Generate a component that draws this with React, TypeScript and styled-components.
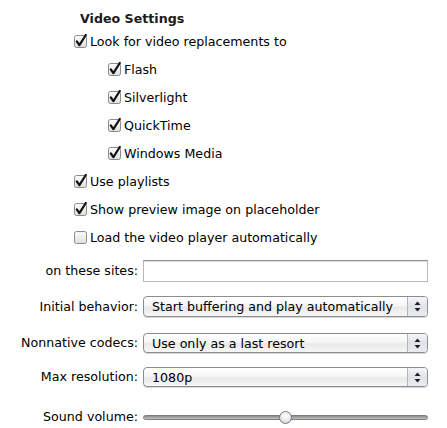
import React from "react";
import styled, { createGlobalStyle } from "styled-components";

const Global = createGlobalStyle`
  html, body { margin: 0; padding: 0; background: #fff; }
  body { font-family: "DejaVu Sans", "Liberation Sans", sans-serif; font-size: 12.65px; color: #000; }
`;

const Page = styled.div`
  width: 447px;
  height: 428px;
  box-sizing: border-box;
  padding-top: 10px;
  display: flex;
  flex-direction: column;
`;

const Title = styled.div`
  font-weight: bold;
  margin-left: 80px;
  height: 17px;
  line-height: 17px;
  color: #1a1a1a;
`;

const CheckList = styled.div`
  display: flex;
  flex-direction: column;
  gap: 11px;
  margin-top: 6px;
`;

const CheckRow = styled.label<{ $indent: number }>`
  display: flex;
  align-items: center;
  gap: 3px;
  height: 17px;
  padding-left: ${(p) => p.$indent}px;
  line-height: 17px;
`;

const Box = styled.span`
  width: 13px;
  height: 13px;
  display: inline-flex;
`;

const FormGrid = styled.div`
  display: grid;
  grid-template-columns: 138px 285px;
  column-gap: 5px;
  margin-top: 14px;
  align-items: center;
`;

const Label = styled.div<{ $h: number }>`
  text-align: right;
  height: ${(p) => p.$h}px;
  line-height: ${(p) => p.$h}px;
  white-space: nowrap;
`;

const Cell = styled.div<{ $h: number }>`
  height: ${(p) => p.$h}px;
  display: flex;
  align-items: center;
`;

const Spacer = styled.div<{ $h: number }>`
  grid-column: 1 / span 2;
  height: ${(p) => p.$h}px;
`;

const TextField = styled.div`
  width: 100%;
  height: 22px;
  box-sizing: border-box;
  border: 1px solid #b8b8b8;
  border-top-color: #8e8e8e;
  box-shadow: inset 0 1px 0 #e2e2e2;
  background: #fff;
`;

const Select = styled.div<{ $h: number }>`
  width: 100%;
  height: ${(p) => p.$h}px;
  box-sizing: border-box;
  border: 1px solid #8d8d8d;
  border-radius: 4px;
  background: linear-gradient(#ffffff 0%, #f6f6f6 45%, #e9e9e9 55%, #f7f7f7 100%);
  display: flex;
  align-items: center;
  overflow: hidden;
  box-shadow: 0 1px 0 #d8d8d8;
`;

const SelectText = styled.span`
  flex: 1;
  padding-left: 8px;
  white-space: nowrap;
`;

const Stepper = styled.span`
  width: 19px;
  align-self: stretch;
  border-left: 1px solid #b5b5b5;
  display: flex;
  align-items: center;
  justify-content: center;
  background: linear-gradient(#f4f6f9 0%, #dfe3e9 50%, #e9ecf1 100%);
`;

const SliderTrack = styled.div`
  position: relative;
  width: 100%;
  height: 5px;
  border-radius: 3px;
  background: linear-gradient(#8a8a8a, #c4c4c4);
  border: 1px solid #7d7d7d;
  box-sizing: border-box;
`;

const Thumb = styled.span`
  position: absolute;
  top: 50%;
  width: 11px;
  height: 11px;
  margin-left: -6px;
  margin-top: -6px;
  border-radius: 50%;
  border: 1px solid #7a7a7a;
  background: radial-gradient(circle at 50% 35%, #ffffff 0%, #e3e6ec 60%, #c0c6d0 100%);
`;

const Check = ({ checked }: { checked: boolean }) => (
  <Box>
    <svg width="13" height="13" viewBox="0 0 13 13" overflow="visible">
      <defs>
        <linearGradient id="cbg" x1="0" y1="0" x2="0" y2="1">
          <stop offset="0" stopColor="#fdfdfd" />
          <stop offset="1" stopColor="#dedede" />
        </linearGradient>
      </defs>
      <rect x="0.5" y="0.5" width="12" height="12" rx="2" fill="url(#cbg)" stroke="#8b8b8b" />
      {checked && (
        <path d="M2.8 6.3 L5.4 10.2 L11.8 0" fill="none" stroke="#111" strokeWidth="2.2" strokeLinecap="round" strokeLinejoin="round" />
      )}
    </svg>
  </Box>
);

const Arrows = () => (
  <svg width="7" height="11" viewBox="0 0 7 11">
    <path d="M3.5 0.5 L6.5 4 L0.5 4 Z" fill="#1f1f1f" />
    <path d="M3.5 10.5 L6.5 7 L0.5 7 Z" fill="#1f1f1f" />
  </svg>
);

const items: [string, number, boolean][] = [
  ["Look for video replacements to", 74, true],
  ["Flash", 108, true],
  ["Silverlight", 108, true],
  ["QuickTime", 108, true],
  ["Windows Media", 108, true],
  ["Use playlists", 74, true],
  ["Show preview image on placeholder", 74, true],
  ["Load the video player automatically", 74, false],
];

export default function App() {
  return (
    <Page>
      <Global />
      <Title>Video Settings</Title>
      <CheckList>
        {items.map(([t, i, c]) => (
          <CheckRow key={t} $indent={i}>
            <Check checked={c} />
            {t}
          </CheckRow>
        ))}
      </CheckList>
      <FormGrid>
        <Label $h={22}>on these sites:</Label>
        <Cell $h={22}>
          <TextField />
        </Cell>
        <Spacer $h={14} />
        <Label $h={21}>Initial behavior:</Label>
        <Cell $h={21}>
          <Select $h={21}>
            <SelectText>Start buffering and play automatically</SelectText>
            <Stepper><Arrows /></Stepper>
          </Select>
        </Cell>
        <Spacer $h={16} />
        <Label $h={20}>Nonnative codecs:</Label>
        <Cell $h={20}>
          <Select $h={20}>
            <SelectText>Use only as a last resort</SelectText>
            <Stepper><Arrows /></Stepper>
          </Select>
        </Cell>
        <Spacer $h={14} />
        <Label $h={20}>Max resolution:</Label>
        <Cell $h={20}>
          <Select $h={20}>
            <SelectText>1080p</SelectText>
            <Stepper><Arrows /></Stepper>
          </Select>
        </Cell>
        <Spacer $h={20} />
        <Label $h={20}>Sound volume:</Label>
        <Cell $h={20}>
          <SliderTrack>
            <Thumb style={{ left: `${(142 / 285) * 100}%` }} />
          </SliderTrack>
        </Cell>
      </FormGrid>
    </Page>
  );
}
